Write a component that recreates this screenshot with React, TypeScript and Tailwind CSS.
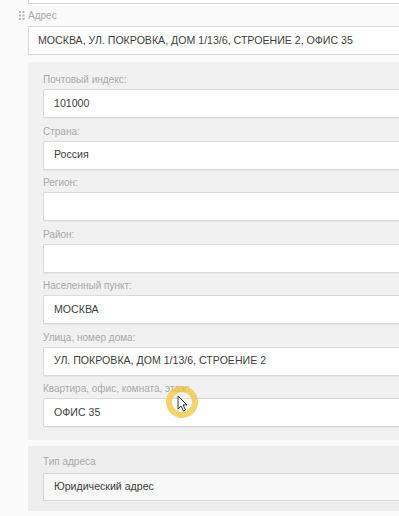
const fields = [
  { label: "Почтовый индекс:", value: "101000" },
  { label: "Страна:", value: "Россия" },
  { label: "Регион:", value: "" },
  { label: "Район:", value: "" },
  { label: "Населенный пункт:", value: "МОСКВА" },
  { label: "Улица, номер дома:", value: "УЛ. ПОКРОВКА, ДОМ 1/13/6, СТРОЕНИЕ 2" },
  { label: "Квартира, офис, комната, этаж:", value: "ОФИС 35" },
];

function DragHandle() {
  return (
    <svg width="6" height="10" viewBox="0 0 6 10" className="absolute left-[-9px] top-[1px]">
      {[0, 1, 2].map((r) =>
        [0, 1].map((c) => (
          <rect key={`${r}-${c}`} x={c * 3.5} y={r * 3.5} width="2" height="2" fill="#b8b8b8" />
        ))
      )}
    </svg>
  );
}

function Field({ label, value }: { label: string; value: string }) {
  return (
    <div className="mb-[7.5px]">
      <div className="text-[10px] leading-[12px] text-[#aaaaaa] mb-[3px]">{label}</div>
      <div className="h-[29px] bg-white border border-r-0 border-[#dadada] rounded-l-[2px] pl-[10px] flex items-center text-[10.6px] text-[#404040] shadow-[0_1px_0_#e6e6e6]">
        {value}
      </div>
    </div>
  );
}

export default function App() {
  return (
    <div
      className="relative w-[399px] h-[516px] overflow-hidden bg-[#fafafa]"
      style={{ fontFamily: '"Liberation Sans", Arial, sans-serif' }}
    >
      <div className="pl-[28px]">
        <div className="h-[4px] bg-white border-x border-b border-[#dadada] border-r-0" />

        <div className="relative mt-[6px] h-[12px] text-[10px] leading-[12px] text-[#aaaaaa]">
          <DragHandle />
          Адрес
        </div>

        <div className="mt-[4px] h-[29px] bg-white border border-r-0 border-[#dadada] pl-[9px] flex items-center text-[10.6px] text-[#404040]">
          МОСКВА, УЛ. ПОКРОВКА, ДОМ 1/13/6, СТРОЕНИЕ 2, ОФИС 35
        </div>

        <div className="mt-[7px] bg-[#f1f1f1] pl-[15px] pt-[12px] pb-[5px]">
          {fields.map((f) => (
            <Field key={f.label} label={f.label} value={f.value} />
          ))}
        </div>

        <div className="mt-[6px] bg-[#eeeeee] pl-[15px] pt-[10px] pb-[10px]">
          <div className="text-[10px] leading-[12px] text-[#aaaaaa] mb-[5px]">Тип адреса</div>
          <div className="h-[28px] bg-[#f8f8f8] border border-r-0 border-[#d6d6d6] pl-[10px] flex items-center text-[10.6px] text-[#404040]">
            Юридический адрес
          </div>
        </div>
      </div>

      <svg width="40" height="40" viewBox="0 0 40 40" className="absolute left-[162px] top-[382px]">
        <circle cx="20" cy="20" r="13" fill="none" stroke="#f3c63c" strokeOpacity="0.75" strokeWidth="6" />
        <path d="M16 14 L16 27 L19 24 L21.5 29 L23.5 28 L21 23 L25 23 Z" fill="#ffffff" stroke="#333" strokeWidth="1" strokeLinejoin="round" />
      </svg>
    </div>
  );
}
